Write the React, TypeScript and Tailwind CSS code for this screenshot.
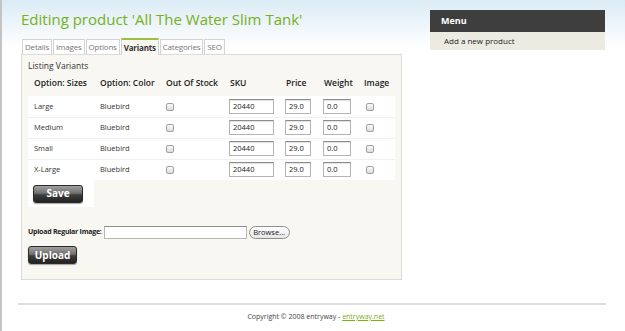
import React from "react";

const rows = ["Large", "Medium", "Small", "X-Large"];

function Check() {
  return (
    <span className="inline-block h-[8px] w-[8px] rounded-[2px] border border-[#a0a0a0] bg-[linear-gradient(to_bottom,#fafafa,#dcdcdc)] align-middle" />
  );
}

function TextBox({ value, w }: { value: string; w: string }) {
  return (
    <div
      className={`${w} flex h-[15px] items-center border border-[#b5b5b5] border-t-[#8c8c8c] bg-white pl-[3px] text-[7.5px] text-[#222] shadow-[inset_0_1px_1px_rgba(0,0,0,0.12)]`}
    >
      {value}
    </div>
  );
}

function DarkButton({ label, w }: { label: string; w: string }) {
  return (
    <div
      className={`${w} flex h-[18px] items-center justify-center rounded-[3px] border border-[#2b2b2b] bg-[linear-gradient(to_bottom,#a0a0a0_0%,#707070_45%,#3e3e3e_55%,#222222_100%)] text-[10px] font-bold text-white shadow-[0_1px_1px_rgba(0,0,0,0.35)]`}
    >
      {label}
    </div>
  );
}

export default function App() {
  return (
    <div
      className="min-h-[331px] w-[625px] border-l-2 border-[#c4c4c4] bg-[linear-gradient(to_bottom,#dbebf5_0px,#ffffff_48px)] text-[#222]"
      style={{ fontFamily: '"Open Sans", "DejaVu Sans", sans-serif' }}
    >
      <div className="flex">
        {/* left column */}
        <div className="w-[400px] shrink-0 pl-[19px]">
          <h1 className="whitespace-nowrap pt-[8px] text-[15px] leading-[22px] tracking-[0px] text-[#77b01a]">
            Editing product &#39;All The Water Slim Tank&#39;
          </h1>
          {/* tabs */}
          <div className="mt-[8px] flex items-end gap-[1px] pl-[1px] text-[8px] tracking-[-0.2px]">
            {["Details", "Images", "Options"].map((t) => (
              <div
                key={t}
                className="flex h-[15px] items-center border border-b-0 border-[#d3d3d3] bg-white px-[2px] text-[#777]"
              >
                {t}
              </div>
            ))}
            <div className="relative -mb-px flex h-[17px] items-center border border-b-0 border-[#d3d3d3] border-t-2 border-t-[#9ac043] bg-[#f8f7f2] px-[2px] font-bold text-[#333]">
              Variants
            </div>
            {["Categories", "SEO"].map((t) => (
              <div
                key={t}
                className="flex h-[15px] items-center border border-b-0 border-[#d3d3d3] bg-white px-[2px] text-[#777]"
              >
                {t}
              </div>
            ))}
          </div>
          {/* panel */}
          <div className="h-[226px] w-[381px] border border-[#dcdcd6] bg-[#f8f7f2] px-[6px] pt-[5px]">
            <div className="text-[8.5px] leading-[12px] text-[#333]">
              Listing Variants
            </div>
            <table className="w-[367px] table-fixed border-collapse text-left">
              <thead>
                <tr className="h-[22px] whitespace-nowrap text-[8.5px] font-semibold text-[#222]">
                  <th className="w-[66px] pl-[6px] font-semibold">Option: Sizes</th>
                  <th className="w-[66px] pl-[6px] font-semibold">Option: Color</th>
                  <th className="w-[64px] pl-[6px] font-semibold">Out Of Stock</th>
                  <th className="w-[56px] pl-[6px] font-semibold">SKU</th>
                  <th className="w-[38px] pl-[6px] font-semibold">Price</th>
                  <th className="w-[40px] pl-[6px] font-semibold">Weight</th>
                  <th className="pl-[6px] font-semibold">Image</th>
                </tr>
              </thead>
              <tbody className="text-[7.5px] text-[#333]">
                <tr className="h-[2px]">
                  <td colSpan={7} />
                </tr>
                {rows.map((r, i) => (
                  <tr
                    key={r}
                    className={`h-[21px] bg-white ${i < rows.length - 1 ? "border-b border-[#efefef]" : ""}`}
                  >
                    <td className="pl-[6px]">{r}</td>
                    <td className="pl-[6px]">Bluebird</td>
                    <td className="pl-[6px]">
                      <Check />
                    </td>
                    <td className="pl-[5px]">
                      <TextBox value="20440" w="w-[45px]" />
                    </td>
                    <td className="pl-[5px]">
                      <TextBox value="29.0" w="w-[26px]" />
                    </td>
                    <td className="pl-[5px]">
                      <TextBox value="0.0" w="w-[28px]" />
                    </td>
                    <td className="pl-[8px]">
                      <Check />
                    </td>
                  </tr>
                ))}
                <tr className="h-[27px]">
                  <td className="bg-white pl-[5px]">
                    <DarkButton label="Save" w="w-[50px]" />
                  </td>
                  <td colSpan={6} />
                </tr>
              </tbody>
            </table>
            <div className="mt-[19px] flex items-center whitespace-nowrap text-[7px] font-bold tracking-[-0.25px] text-[#222]">
              <span className="mr-[2px]">Upload Regular Image:</span>
              <div className="h-[13px] w-[143px] border border-[#b5b5b5] border-t-[#8c8c8c] bg-white" />
              <div className="ml-[2px] flex h-[13px] w-[41px] items-center justify-center rounded-full border border-[#8f8f8f] bg-[linear-gradient(to_bottom,#ffffff,#e6e6e6)] text-[7.5px] font-normal tracking-normal text-[#222]">
                Browse...
              </div>
            </div>
            <div className="mt-[7px]">
              <DarkButton label="Upload" w="w-[49px]" />
            </div>
          </div>
        </div>
        {/* right column */}
        <div className="ml-[28px] mt-[10px] w-[175px] shrink-0">
          <div className="flex h-[22px] items-center bg-[#3e3e3e] pl-[11px] text-[9px] font-bold text-white">
            Menu
          </div>
          <div className="flex h-[18px] items-center bg-[#ecebe1] pl-[14px] text-[8px] text-[#222]">
            Add a new product
          </div>
        </div>
      </div>
      {/* footer */}
      <div className="ml-[16px] mt-[23px] h-[2px] w-[588px] bg-[#dedede]" />
      <div className="ml-[16px] mt-[7px] w-[596px] text-center text-[7px] text-[#444]">
        Copyright © 2008 entryway - <span className="text-[#77b01a] underline">entryway.net</span>
      </div>
    </div>
  );
}
